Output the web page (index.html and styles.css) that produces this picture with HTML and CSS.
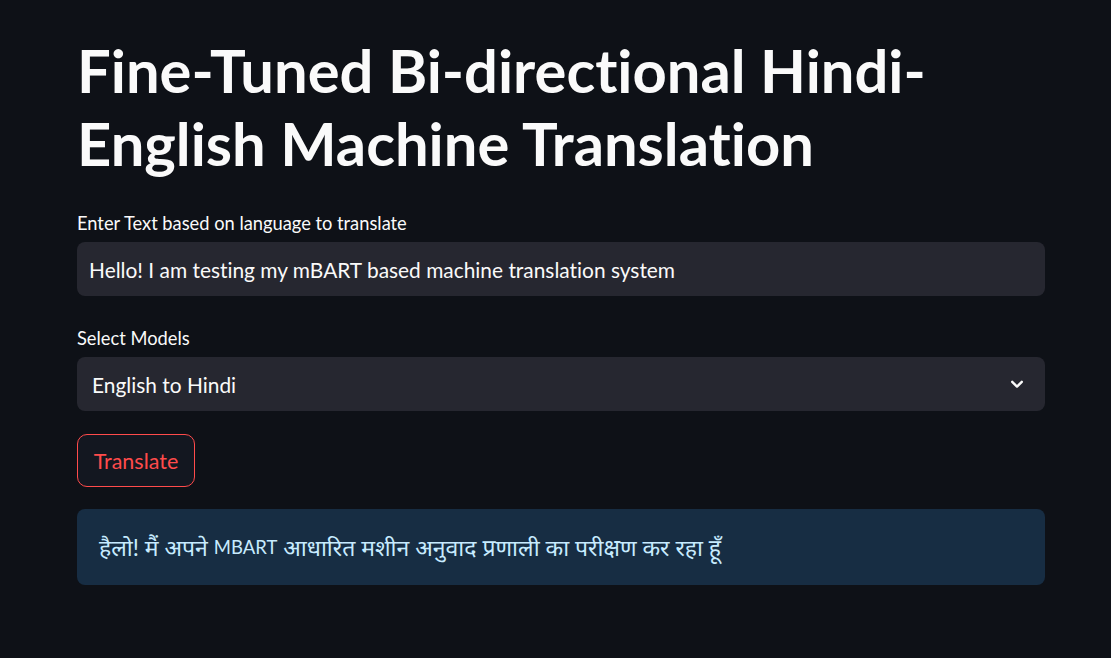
FILE: index.html
```html
<!DOCTYPE html>
<html lang="en">
<head>
<meta charset="utf-8">
<title>Fine-Tuned Bi-directional Hindi-English Machine Translation</title>
<link rel="stylesheet" href="styles.css">
</head>
<body>
<main class="app">
  <div class="block">
    <h1 class="title">Fine-Tuned Bi-directional Hindi-<br>English Machine Translation</h1>

    <div class="field">
      <label class="label" for="src">Enter Text based on language to translate</label>
      <div class="input" id="src">Hello! I am testing my mBART based machine translation system</div>
    </div>

    <div class="field">
      <label class="label">Select Models</label>
      <div class="select">
        <span>English to Hindi</span>
        <svg class="chev" width="16" height="16" viewBox="0 0 16 16"><path d="M3.2 5.8 L8 10.6 L12.8 5.8" fill="none" stroke="#fafafa" stroke-width="2.4" stroke-linecap="round" stroke-linejoin="round"/></svg>
      </div>
    </div>

    <div class="btn-row"><button class="btn">Translate</button></div>

    <div class="info"><span class="deva">हैलो! मैं अपने&nbsp;</span><span class="latin">MBART</span><span class="deva">&nbsp;आधारित मशीन अनुवाद प्रणाली का परीक्षण कर रहा हूँ</span></div>
  </div>
</main>
</body>
</html>
```
FILE: styles.css
```css
html, body {
  margin: 0;
  padding: 0;
  background: #0e1117;
  color: #fafafa;
  font-family: Lato, "Noto Sans", "Noto Sans Devanagari", sans-serif;
  font-variant-ligatures: none;
}
.app {
  padding-left: 77px;
  padding-top: 34px;
}
.block {
  width: 968px;
  display: flex;
  flex-direction: column;
}
.title {
  margin: 0;
  font-size: 59.7px;
  line-height: 73px;
  font-weight: 700;
  color: #fafafa;
}
.field {
  display: flex;
  flex-direction: column;
  gap: 8px;
}
.title + .field { margin-top: 32px; }
.field + .field { margin-top: 31px; }
.label {
  font-size: 18.3px;
  line-height: 22px;
  color: #fafafa;
}
.input, .select {
  background: #262730;
  border-radius: 8px;
  height: 54px;
  display: flex;
  align-items: center;
  font-size: 20.9px;
  color: #fafafa;
  box-sizing: border-box;
}
.input { padding-left: 12px; }
.select {
  padding-left: 15px;
  padding-right: 20px;
  justify-content: space-between;
}
.btn-row { margin-top: 23px; }
.btn {
  font-family: inherit;
  font-variant-ligatures: none;
  background: #131720;
  color: #ff4b4b;
  border: 1px solid #ff4b4b;
  border-radius: 10px;
  height: 53px;
  width: 118px;
  padding: 0;
  font-size: 21.5px;
}
.info {
  margin-top: 22px;
  background: #172d43;
  color: #c7ebff;
  border-radius: 8px;
  height: 76px;
  box-sizing: border-box;
  padding-left: 22px;
  display: flex;
  align-items: center;
  white-space: pre;
}
.deva { font-size: 23px; }
.latin { font-size: 18.5px; }
```
